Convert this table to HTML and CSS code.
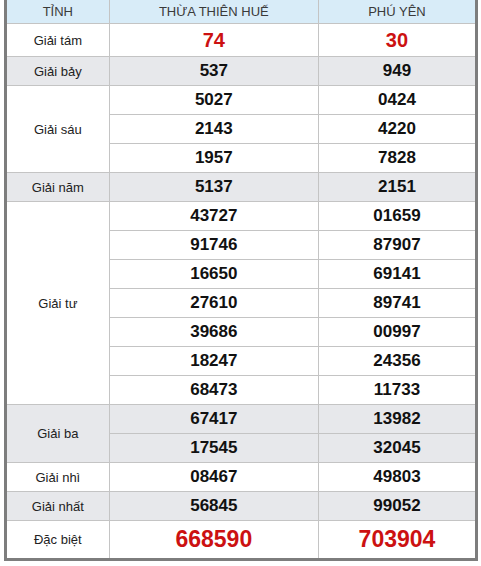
FILE: index.html
```html
<!DOCTYPE html>
<html>
<head>
<meta charset="utf-8">
<link rel="stylesheet" href="styles.css">
</head>
<body>
<table class="kq">
  <colgroup><col class="c1"><col class="c2"><col class="c3"></colgroup>
  <thead>
    <tr class="hd"><th>TỈNH</th><th>THỪA THIÊN HUẾ</th><th>PHÚ YÊN</th></tr>
  </thead>
  <tbody>
    <tr class="r8"><td class="lbl">Giải tám</td><td class="n red8">74</td><td class="n red8">30</td></tr>
    <tr class="alt"><td class="lbl">Giải bảy</td><td class="n">537</td><td class="n">949</td></tr>
    <tr><td class="lbl" rowspan="3">Giải sáu</td><td class="n">5027</td><td class="n">0424</td></tr>
    <tr><td class="n">2143</td><td class="n">4220</td></tr>
    <tr><td class="n">1957</td><td class="n">7828</td></tr>
    <tr class="alt"><td class="lbl">Giải năm</td><td class="n">5137</td><td class="n">2151</td></tr>
    <tr><td class="lbl" rowspan="7">Giải tư</td><td class="n">43727</td><td class="n">01659</td></tr>
    <tr><td class="n">91746</td><td class="n">87907</td></tr>
    <tr><td class="n">16650</td><td class="n">69141</td></tr>
    <tr><td class="n">27610</td><td class="n">89741</td></tr>
    <tr><td class="n">39686</td><td class="n">00997</td></tr>
    <tr><td class="n">18247</td><td class="n">24356</td></tr>
    <tr><td class="n">68473</td><td class="n">11733</td></tr>
    <tr class="alt"><td class="lbl" rowspan="2">Giải ba</td><td class="n">67417</td><td class="n">13982</td></tr>
    <tr class="alt"><td class="n">17545</td><td class="n">32045</td></tr>
    <tr><td class="lbl">Giải nhì</td><td class="n">08467</td><td class="n">49803</td></tr>
    <tr class="alt"><td class="lbl">Giải nhất</td><td class="n">56845</td><td class="n">99052</td></tr>
    <tr class="db"><td class="lbl">Đặc biệt</td><td class="n redb">668590</td><td class="n redb">703904</td></tr>
  </tbody>
</table>
</body>
</html>
```
FILE: styles.css
```css
html, body {
  margin: 0;
  padding: 0;
  background: #ffffff;
}
body {
  font-family: "Liberation Sans", Arial, sans-serif;
}
.kq {
  margin-left: 4px;
  width: 474px;
  border-collapse: collapse;
  table-layout: fixed;
  border-left: 3px solid #7d7d7d;
  border-right: 3px solid #7d7d7d;
  border-bottom: 3px solid #7d7d7d;
}
.c1 { width: 103px; }
.c2 { width: 208px; }
.c3 { width: 157px; }
.kq th, .kq td {
  padding: 0;
  text-align: center;
  vertical-align: middle;
  border: 1px solid #c4c4c4;
}
.kq thead th {
  background: #d8ecf8;
  color: #3a3a3a;
  font-weight: normal;
  font-size: 13px;
  height: 23px;
  border-top: none;
}
.kq td { height: 28px; }
.lbl {
  font-size: 13px;
  color: #222222;
}
.n {
  font-size: 17px;
  font-weight: bold;
  color: #111111;
}
.alt td { background: #e7e8eb; }
.r8 td { height: 32px; }
.red8 {
  font-size: 20px;
  color: #cc1111;
}
.db td { height: 37px; }
.redb {
  font-size: 23px;
  color: #cc1111;
}
```
